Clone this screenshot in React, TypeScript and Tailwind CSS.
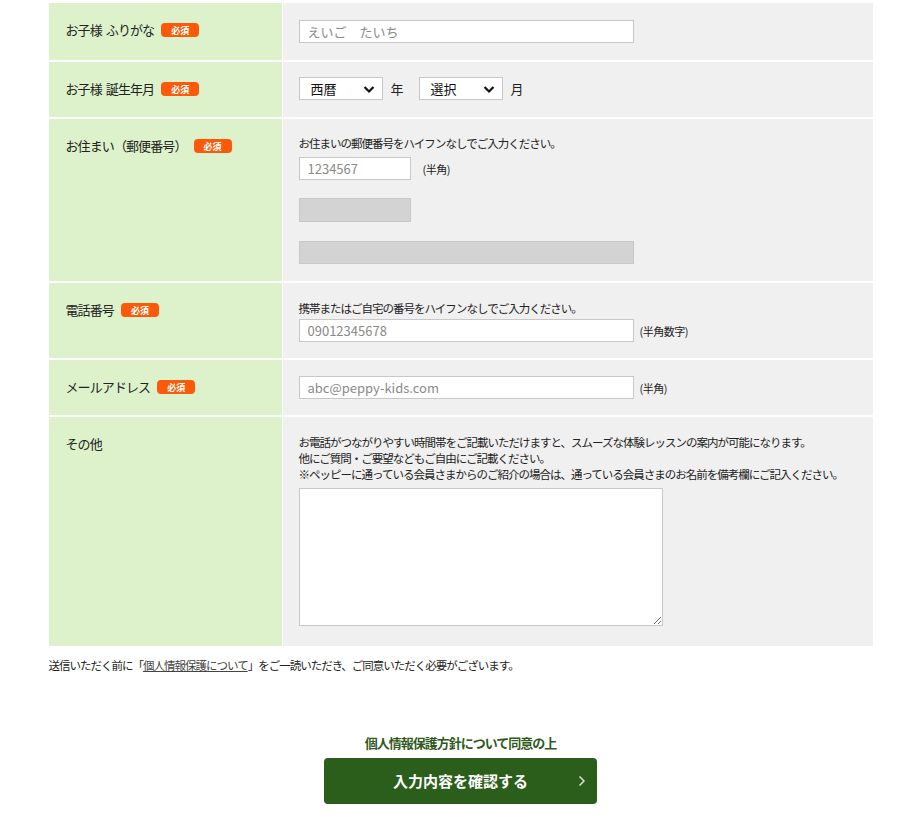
import React from 'react';

const font = { fontFamily: '"Noto Sans CJK JP", "Noto Sans", sans-serif' };

function Badge() {
  return (
    <span className="ml-[7px] inline-flex h-[14px] w-[38px] items-center justify-center rounded-[4px] bg-[#fa5a0a] text-[9px] font-bold leading-none tracking-normal text-white">
      必須
    </span>
  );
}

function Label({ text, required = true }: { text: string; required?: boolean }) {
  const words = text.split(' ');
  return (
    <div className="bg-[#ddf2cb] pl-[17px] pt-[18px]">
      <div className="flex h-[18px] items-center text-[13px] leading-[18px] tracking-[-0.9px] text-[#222]">
        {words.map((w, i) => (
          <span key={i} className={i > 0 ? 'ml-[4px]' : ''}>
            {w}
          </span>
        ))}
        {required && <Badge />}
      </div>
    </div>
  );
}

function TextInput({ placeholder, w }: { placeholder: string; w: string }) {
  return (
    <input
      placeholder={placeholder}
      className={`${w} block h-[23px] border border-[#c8c8c8] bg-white px-[8px] text-[13px] leading-[21px] text-[#333] outline-none placeholder:text-[#8a8a8a]`}
    />
  );
}

function Select({ value }: { value: string }) {
  return (
    <div className="relative flex h-[23px] w-[84px] items-center border border-[#c8c8c8] bg-white pl-[11px] text-[13px] leading-[21px] text-[#111]">
      {value}
      <svg className="absolute right-[7px] top-[7px]" width="12" height="9" viewBox="0 0 12 9">
        <path d="M1.5 2 L6 6.5 L10.5 2" fill="none" stroke="#111" strokeWidth="2.2" />
      </svg>
    </div>
  );
}

const desc = 'text-[11.5px] leading-[16px] tracking-[-1px]';
const unit = 'text-[11px] leading-[16px] tracking-[-0.5px]';

export default function App() {
  return (
    <main className="min-h-screen bg-white pt-[3px] text-[#222]" style={font}>
      <div className="mx-auto w-[824px]">
        <div className="grid grid-cols-[233px_1fr] gap-x-px gap-y-[2px]">
          <Label text="お子様 ふりがな" />
          <div className="bg-[#f0f0f0] py-[17px] pl-[16px]">
            <TextInput placeholder="えいご　たいち" w="w-[335px]" />
          </div>

          <Label text="お子様 誕生年月" />
          <div className="flex items-center bg-[#f0f0f0] pb-[17px] pl-[16px] pt-[15px] text-[13px] leading-[18px]">
            <Select value="西暦" />
            <span className="ml-[8px] mr-[15px]">年</span>
            <Select value="選択" />
            <span className="ml-[8px]">月</span>
          </div>

          <Label text="お住まい（郵便番号）" />
          <div className="bg-[#f0f0f0] pb-[17px] pl-[16px] pt-[16px]">
            <p className={desc}>お住まいの郵便番号をハイフンなしでご入力ください。</p>
            <div className="mt-[6px] flex items-center">
              <TextInput placeholder="1234567" w="w-[112px]" />
              <span className={`ml-[12px] ${unit}`}>(半角)</span>
            </div>
            <div className="mt-[18px] h-[24px] w-[112px] border border-[#c8c8c8] bg-[#d3d3d3]" />
            <div className="mt-[19px] h-[23px] w-[335px] border border-[#c8c8c8] bg-[#d3d3d3]" />
          </div>

          <Label text="電話番号" />
          <div className="bg-[#f0f0f0] pb-[16px] pl-[16px] pt-[17px]">
            <p className={desc}>携帯またはご自宅の番号をハイフンなしでご入力ください。</p>
            <div className="mt-[3px] flex items-center">
              <TextInput placeholder="09012345678" w="w-[335px]" />
              <span className={`ml-[6px] ${unit}`}>(半角数字)</span>
            </div>
          </div>

          <Label text="メールアドレス" />
          <div className="flex items-center bg-[#f0f0f0] pb-[16px] pl-[16px] pt-[16px]">
            <TextInput placeholder="abc@peppy-kids.com" w="w-[335px]" />
            <span className={`ml-[6px] ${unit}`}>(半角)</span>
          </div>

          <Label text="その他" required={false} />
          <div className="bg-[#f0f0f0] pb-[20px] pl-[16px] pt-[17px]">
            <p className={desc}>
              お電話がつながりやすい時間帯をご記載いただけますと、スムーズな体験レッスンの案内が可能になります。
              <br />
              他にご質問・ご要望などもご自由にご記載ください。
              <br />
              ※ペッピーに通っている会員さまからのご紹介の場合は、通っている会員さまのお名前を備考欄にご記入ください。
            </p>
            <textarea className="mt-[6px] block h-[138px] w-[364px] border border-[#c8c8c8] bg-white outline-none" />
          </div>
        </div>

        <p className={`mt-[11px] ${desc}`}>
          送信いただく前に「
          <a href="#" className="text-[#444] underline">
            個人情報保護について
          </a>
          」をご一読いただき、ご同意いただく必要がございます。
        </p>

        <div className="mt-[61px] flex flex-col items-center">
          <p className="text-[13px] font-bold leading-[18px] tracking-[-1px] text-[#2f5a1c]">個人情報保護方針について同意の上</p>
          <button className="relative mt-[6px] flex h-[46px] w-[273px] items-center justify-center rounded-[4px] bg-[#2b5e1b] text-[15px] font-bold leading-[20px] text-white">
            入力内容を確認する
            <svg className="absolute right-[11px] top-[17px]" width="8" height="12" viewBox="0 0 8 12">
              <path d="M1.5 1.5 L6 6 L1.5 10.5" fill="none" stroke="#d8e2d2" strokeWidth="1.5" />
            </svg>
          </button>
        </div>
      </div>
    </main>
  );
}
